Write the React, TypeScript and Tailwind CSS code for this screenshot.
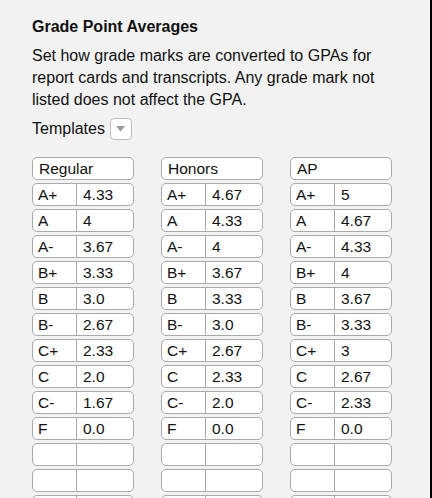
import React from "react";

type Scale = { name: string; rows: [string, string][] };

const scales: Scale[] = [
  {
    name: "Regular",
    rows: [
      ["A+", "4.33"], ["A", "4"], ["A-", "3.67"], ["B+", "3.33"], ["B", "3.0"],
      ["B-", "2.67"], ["C+", "2.33"], ["C", "2.0"], ["C-", "1.67"], ["F", "0.0"],
    ],
  },
  {
    name: "Honors",
    rows: [
      ["A+", "4.67"], ["A", "4.33"], ["A-", "4"], ["B+", "3.67"], ["B", "3.33"],
      ["B-", "3.0"], ["C+", "2.67"], ["C", "2.33"], ["C-", "2.0"], ["F", "0.0"],
    ],
  },
  {
    name: "AP",
    rows: [
      ["A+", "5"], ["A", "4.67"], ["A-", "4.33"], ["B+", "4"], ["B", "3.67"],
      ["B-", "3.33"], ["C+", "3"], ["C", "2.67"], ["C-", "2.33"], ["F", "0.0"],
    ],
  },
];

function ScaleColumn({ scale }: { scale: Scale }) {
  const rows = [...scale.rows, ["", ""], ["", ""], ["", ""], ["", ""]];
  return (
    <div className="flex w-[102px] flex-col gap-[3px] text-[15.5px]">
      <div className="h-[23px] rounded-[5px] border border-[#a9a9a9] bg-white pl-[6px] leading-[21px]">
        {scale.name}
      </div>
      {rows.map(([grade, gpa], i) => (
        <div
          key={i}
          className="flex h-[23px] shrink-0 rounded-[5px] border border-[#a9a9a9] bg-white leading-[21px]"
        >
          <div className="w-[44px] border-r border-[#a9a9a9] pl-[5px]">{grade}</div>
          <div className="flex-1 pl-[6px]">{gpa}</div>
        </div>
      ))}
    </div>
  );
}

export default function App() {
  return (
    <div
      className="h-[498px] w-[432px] overflow-hidden border-r-2 border-black bg-[#f2f2f2] pl-8 pt-[17px] text-[16px] text-[#111]"
      style={{ fontFamily: '"Liberation Sans", Arial, sans-serif' }}
    >
      <h1 className="text-[16px] font-bold leading-5">Grade Point Averages</h1>
      <p className="mt-2 w-[345px] leading-[22px]">
        Set how grade marks are converted to GPAs for report cards and transcripts. Any grade mark
        not listed does not affect the GPA.
      </p>
      <div className="mt-[7px] flex items-center gap-[5px]">
        <span className="leading-[22px]">Templates</span>
        <button className="flex h-[22px] w-[22px] items-center justify-center rounded-[4px] border border-[#bcbcbc] bg-white">
          <svg width="9" height="6" viewBox="0 0 9 6">
            <path d="M0 0 L9 0 L4.5 5.5 Z" fill="#9a9a9a" />
          </svg>
        </button>
      </div>
      <div className="mt-[17px] flex gap-[27px]">
        {scales.map((s) => (
          <ScaleColumn key={s.name} scale={s} />
        ))}
      </div>
    </div>
  );
}
